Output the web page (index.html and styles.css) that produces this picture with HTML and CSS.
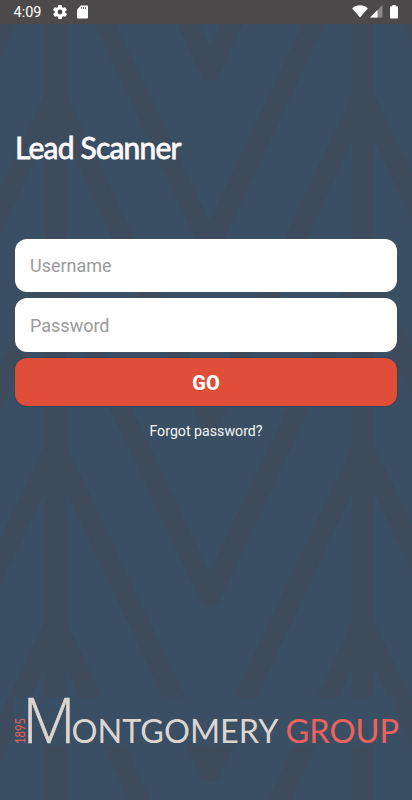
FILE: index.html
```
<!DOCTYPE html>
<html lang="en">
<head>
    <meta charset="UTF-8">
    <meta name="viewport" content="width=device-width, initial-scale=1">
    <title>Lead Scanner</title>
    <link rel="stylesheet" href="styles.css">
</head>
<body>
<div class="screen">
    <!-- background pattern -->
    <svg class="pattern" width="412" height="800" viewBox="0 0 412 800" aria-hidden="true">
        <defs>
            <path id="chevron" d="M66.3 0 209.7 303.6 352.7 0V46L217 337H203L66.3 46ZM45 0-10 116V162L45 46ZM374 0 424 105.5V151.5L374 46Z"/>
        </defs>
        <rect x="45" width="21.3" height="800"/>
        <rect x="352.7" width="21.3" height="800"/>
        <use href="#chevron" y="-257.6"/>
        <use href="#chevron" y="-82"/>
        <use href="#chevron" y="93.8"/>
        <use href="#chevron" y="269.5"/>
        <use href="#chevron" y="445.2"/>
        <use href="#chevron" y="621"/>
    </svg>

    <div class="status-bar">
        <span class="time">4:09</span>
        <svg class="icon-gear" width="14" height="14" viewBox="2 2 20 20"><path fill="#fff" d="M19.4 13c0-.3.1-.6.1-1s0-.7-.1-1l2.1-1.600c.2-.2.3-.4.1-.7l-2-3.400c-.1-.2-.4-.3-.6-.2l-2.500 1c-.5-.4-1.100-.7-1.700-1l-.4-2.600c0-.3-.2-.5-.5-.5h-4c-.2 0-.5.2-.5.4l-.4 2.700c-.6.2-1.100.6-1.700 1l-2.500-1c-.2-.1-.5 0-.6.2l-2 3.400c-.1.3-.1.5.1.7L4.600 11c-.1.3-.1.6-.1 1s0 .7.1 1l-2.100 1.600c-.2.2-.3.4-.1.7l2 3.400c.1.2.4.3.6.2l2.500-1c.5.4 1.100.7 1.700 1l.4 2.600c0 .3.2.5.5.5h4c.2 0 .5-.2.5-.4l.4-2.700c.6-.2 1.100-.6 1.700-1l2.500 1c.2.1.5 0 .6-.2l2-3.400c.1-.3.1-.5-.1-.7ZM12 15.400a3.400 3.400 0 1 1 0-6.800 3.400 3.400 0 0 1 0 6.800Z"/></svg>
        <svg class="icon-sd" width="11" height="14" viewBox="0 0 11 14"><path fill="#fff" d="M4 .5h6a1 1 0 0 1 1 1v11a1 1 0 0 1-1 1H1a1 1 0 0 1-1-1V4.500Z"/><path stroke="#777476" stroke-width="1" d="M4.500 2v2M6.500 2v2M8.500 2v2"/></svg>
        <svg class="icon-wifi" width="16" height="13" viewBox="0 0 16 13"><path fill="#fff" d="M0 3.300C4.500-.7 11.500-.7 16 3.300L8 12.600Z"/></svg>
        <svg class="icon-signal" width="13" height="13" viewBox="0 0 13 13"><path fill="#8a888a" d="M12.500 0v12.500H0Z"/><path fill="#fff" d="M7.500 5v7.500H0Z"/></svg>
        <svg class="icon-battery" width="8" height="14" viewBox="0 0 8 14"><path fill="#fff" d="M2.300 0h3.400v1.300H7a1 1 0 0 1 1 1V12.500a1 1 0 0 1-1 1H1a1 1 0 0 1-1-1V2.300a1 1 0 0 1 1-1h1.300Z"/></svg>
    </div>

    <h1 class="title">Lead Scanner</h1>

    <form class="login">
        <input class="field" type="text" placeholder="Username">
        <input class="field" type="password" placeholder="Password">
        <button class="go" type="button">GO</button>
        <a class="forgot">Forgot password?</a>
    </form>

    <svg class="logo" width="384" height="48" viewBox="0 0 384 48">
        <text class="year" transform="translate(10.500 47) rotate(-90)" textLength="26" lengthAdjust="spacingAndGlyphs">1895</text>
        <text class="big" x="8.500" y="46" textLength="53" lengthAdjust="spacingAndGlyphs">M</text>
        <text class="small" x="57.500" y="46" textLength="207" lengthAdjust="spacingAndGlyphs">ONTGOMERY</text>
        <text class="small group" x="271.500" y="46" textLength="113.500" lengthAdjust="spacingAndGlyphs">GROUP</text>
    </svg>
</div>
</body>
</html>
```
FILE: styles.css
```
*{
    box-sizing: border-box;
}
body{
    margin: 0;
    font-family: Roboto, sans-serif;
}
.screen{
    position: relative;
    display: flex;
    flex-direction: column;
    width: 412px;
    height: 800px;
    overflow: hidden;
    background-color: #3a4f63;
}
.pattern{
    position: absolute;
    top: 0;
    left: 0;
    fill: #3d4b5d;
}
.status-bar{
    position: relative;
    display: flex;
    align-items: center;
    height: 23.5px;
    padding: 0 14px 0 13.5px;
    background-color: #4c494b;
}
.time{
    width: 39px;
    padding-top: 2px;
    font-size: 14.5px;
    line-height: 24px;
    color: #fff;
}
.icon-sd{
    margin-left: 10px;
}
.icon-wifi{
    margin-left: auto;
}
.icon-signal{
    margin-left: 1.5px;
}
.icon-battery{
    margin-left: 7.5px;
}
.title{
    position: relative;
    margin: 105.5px 0 0 15px;
    font-family: Lato, sans-serif;
    font-size: 30px;
    font-weight: 400;
    line-height: 36px;
    letter-spacing: -0.8px;
    color: #fdf9fd;
    -webkit-text-stroke: 0.8px #fdf9fd;
}
.login{
    position: relative;
    display: flex;
    flex-direction: column;
    gap: 6px;
    margin: 73.5px 15px 0;
}
.field{
    width: 100%;
    height: 53.7px;
    padding: 0 15px;
    border: 0;
    border-radius: 12px;
    font-family: inherit;
    font-size: 18px;
    background-color: #fff;
}
.field::placeholder{
    color: #9b9b9b;
}
.go{
    height: 48px;
    padding: 2px 0 0;
    border: 0;
    border-radius: 12px;
    font-family: inherit;
    font-size: 20px;
    font-weight: 800;
    color: #fff;
    background-color: #e04e39;
    box-shadow: 0 0 2px #123e50;
}
.forgot{
    margin-top: 11px;
    font-size: 14.2px;
    line-height: 17px;
    text-align: center;
    color: #f4f5f7;
}
.logo{
    position: relative;
    margin: auto 0 55px 14px;
    background-color: #3a4f63;
    overflow: visible;
}
.logo text{
    font-family: Lato, sans-serif;
    fill: #ddd5d0;
}
.logo .year{
    font-size: 14px;
    fill: #e8635c;
}
.logo .big{
    font-family: "Open Sans", sans-serif;
    font-size: 63px;
    font-weight: 300;
    stroke: #ddd5d0;
    stroke-width: 0.6px;
}
.logo .small{
    font-size: 33px;
}
.logo .group{
    fill: #ee625c;
}
```
